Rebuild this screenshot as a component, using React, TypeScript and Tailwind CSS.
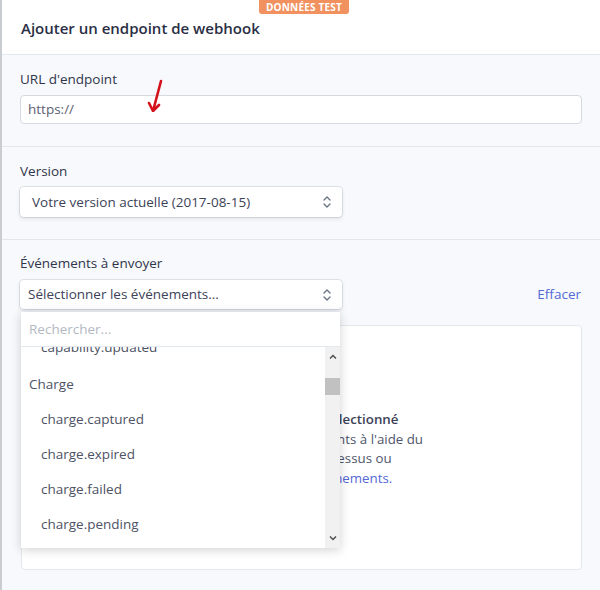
import React from "react";

const Chevrons: React.FC = () => (
  <svg width="10" height="14" viewBox="0 0 10 14" fill="none" stroke="#6b7385" strokeWidth="1.4" strokeLinecap="round" strokeLinejoin="round">
    <path d="M2 5l3-3 3 3" />
    <path d="M2 9l3 3 3-3" />
  </svg>
);

const Arrow: React.FC<{ className: string; d: string }> = ({ className, d }) => (
  <svg className={className} viewBox="0 0 20 32" fill="none" stroke="#d3121b" strokeWidth="2.6" strokeLinecap="round" strokeLinejoin="round">
    <path d={d} />
  </svg>
);

const events = ["charge.captured", "charge.expired", "charge.failed", "charge.pending"];

const App: React.FC = () => {
  return (
    <div
      className="relative h-[590px] w-[600px] overflow-hidden border-l-2 border-[#c9ccd1] bg-[#f7f9fc] text-[#3c4257]"
      style={{ fontFamily: '"Open Sans", "Noto Sans", sans-serif' }}
    >
      {/* header */}
      <div className="relative h-[55px] border-b border-[#e3e8ee] bg-white">
        <div className="absolute left-[257px] top-0 h-[14px] rounded-b-[3px] bg-[#f0915f] px-[7px] text-[10px] font-bold leading-[14px] tracking-[0.2px] text-white">
          DONNÉES TEST
        </div>
        <h1 className="pl-[19px] pt-[17px] text-[15px] font-semibold leading-[22px] text-[#2a2f45]">
          Ajouter un endpoint de webhook
        </h1>
      </div>

      {/* url */}
      <div className="border-b border-[#e3e8ee] px-[18px] pb-[22px] pt-[14px]">
        <label className="block text-[13.5px] leading-[20px] text-[#30354a]">URL d'endpoint</label>
        <div className="mt-[6px] flex h-[29px] items-center rounded-[4px] border border-[#d5d9e0] bg-white px-[7px] text-[13.5px] text-[#5b6070]">
          https://
        </div>
      </div>

      {/* version */}
      <div className="border-b border-[#e3e8ee] px-[18px] pb-[22px] pt-[14px]">
        <label className="block text-[13.5px] leading-[20px] text-[#30354a]">Version</label>
        <div className="mt-[6px] flex h-[30px] w-[322px] items-center justify-between rounded-[4px] bg-white pl-[12px] pr-[10px] text-[13.5px] text-[#3c4257] shadow-[0_0_0_1px_rgba(60,66,87,0.12),0_2px_4px_rgba(60,66,87,0.12)]">
          <span>Votre version actuelle (2017-08-15)</span>
          <Chevrons />
        </div>
      </div>

      {/* events */}
      <div className="px-[18px] pt-[13px]">
        <label className="block text-[13.5px] leading-[20px] text-[#30354a]">Événements à envoyer</label>
        <div className="mt-[7px] flex items-center justify-between">
          <div className="relative">
            <div className="flex h-[29px] w-[322px] items-center justify-between rounded-[4px] bg-white pl-[8px] pr-[10px] text-[13.5px] text-[#3c4257] shadow-[0_0_0_1px_rgba(60,66,87,0.12),0_2px_4px_rgba(60,66,87,0.12)]">
              <span>Sélectionner les événements...</span>
              <Chevrons />
            </div>

            {/* dropdown menu */}
            <div className="absolute left-[1px] top-[32px] z-10 w-[319px] bg-white shadow-[0_2px_10px_rgba(0,0,0,0.18)]">
              <div className="flex h-[35px] items-center border-b border-[#e3e8ee] px-[8px] text-[13.5px] text-[#b3b8c2]">
                Rechercher...
              </div>
              <div className="flex h-[201px] overflow-hidden">
                <div className="flex-1 overflow-hidden">
                  <div className="-mt-[17px] flex h-[35px] items-center pl-[20px] text-[13.5px] text-[#4d5264]">capability.updated</div>
                  <div className="mt-[2px] flex h-[35px] items-center pl-[8px] text-[13.5px] text-[#4d5264]">Charge</div>
                  {events.map((e) => (
                    <div key={e} className="flex h-[35px] items-center pl-[20px] text-[13.5px] text-[#4d5264]">
                      {e}
                    </div>
                  ))}
                </div>
                <div className="flex w-[15px] flex-col items-center bg-[#f1f1f1]">
                  <svg className="mt-[7px]" width="8" height="5" viewBox="0 0 8 5" fill="none" stroke="#505050" strokeWidth="1.5">
                    <path d="M1 4.5L4 1.5l3 3" />
                  </svg>
                  <div className="mt-[19px] h-[17px] w-[15px] bg-[#c1c1c1]" />
                  <svg className="mb-[7px] mt-auto" width="8" height="5" viewBox="0 0 8 5" fill="none" stroke="#505050" strokeWidth="1.5">
                    <path d="M1 0.5L4 3.5l3-3" />
                  </svg>
                </div>
              </div>
            </div>
          </div>
          <button className="mr-[1px] text-[13.5px] text-[#5469d4]">Effacer</button>
        </div>

        {/* empty state box */}
        <div className="ml-[1px] mt-[16px] h-[245px] rounded-[4px] border border-[#e3e8ee] bg-white">
          <div className="pt-[84px] text-center text-[13.3px] leading-[19.5px] text-[#4f566b]">
            <div className="font-semibold text-[#3c4257]">Aucun événement sélectionné</div>
            <div>Recherchez des événements à l'aide du</div>
            <div>menu déroulant ci-dessus ou</div>
            <div className="text-[#5469d4]">afficher tous les événements.</div>
          </div>
        </div>
      </div>

      {/* red annotations */}
      <Arrow className="absolute left-[141px] top-[78px] h-[34px] w-[20px]" d="M18 2 L10 32 M6 24 L10 32 L16 26" />
      <Arrow className="absolute left-[96px] top-[370px] h-[30px] w-[20px]" d="M18 2 L9 28 M5 18 L9 28 L16 22" />
    </div>
  );
};

export default App;
